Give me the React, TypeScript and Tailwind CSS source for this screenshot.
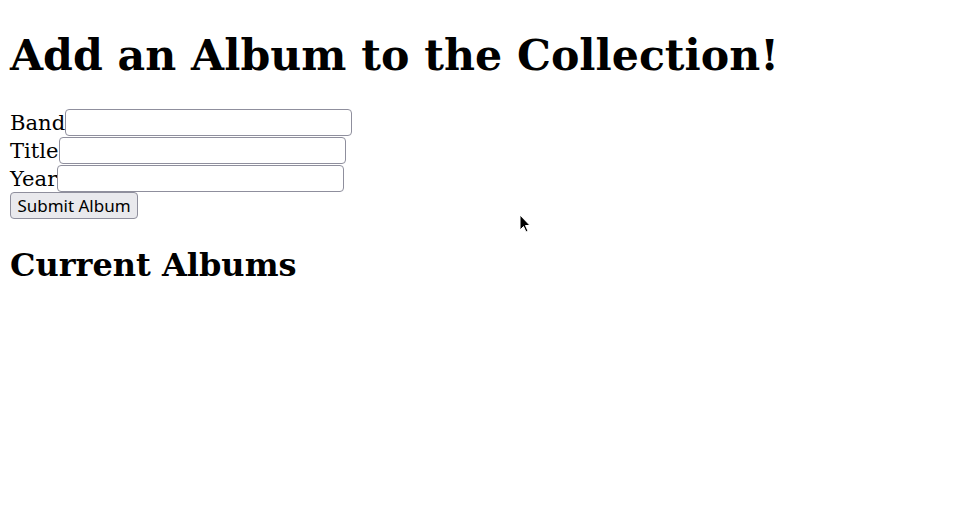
import React from "react";

export default function App() {
  const serif = { fontFamily: '"DejaVu Serif", serif' };
  return (
    <div className="relative min-h-[506px] w-[962px] bg-white px-[10px] pt-[30px] text-black" style={serif}>
      <h1 className="m-0 text-[42.67px] font-bold leading-[50px]" style={serif}>
        Add an Album to the Collection!
      </h1>
      <form className="mt-[28px] flex flex-col" onSubmit={(e) => e.preventDefault()}>
        {["Band", "Title", "Year"].map((l) => (
          <div key={l} className="flex h-[28px] items-center">
            <label className="text-[21.1px] leading-[25px]">{l}</label>
            <input
              type="text"
              className="h-[27px] w-[287px] rounded-[4px] border border-[#8f8f9d] bg-white px-[3px] outline-none"
            />
          </div>
        ))}
        <div>
          <button
            type="submit"
            className="flex h-[27px] w-[128px] items-center justify-center rounded-[4px] border border-[#8f8f9d] bg-[#e9e9ed] text-[17px] leading-[20px] text-black"
            style={{ fontFamily: '"Noto Sans", "Open Sans", sans-serif' }}
          >
            Submit Album
          </button>
        </div>
      </form>
      <h2 className="m-0 mt-[27px] text-[32px] font-bold leading-[38px]" style={serif}>
        Current Albums
      </h2>
      <svg
        className="absolute left-[519px] top-[214px]"
        width="13"
        height="20"
        viewBox="0 0 13 20"
      >
        <path d="M1 1 L1 16 L4.5 12.5 L7 18 L9 17 L6.5 11.5 L11 11.5 Z" fill="#000" stroke="#fff" strokeWidth="1" />
      </svg>
    </div>
  );
}
